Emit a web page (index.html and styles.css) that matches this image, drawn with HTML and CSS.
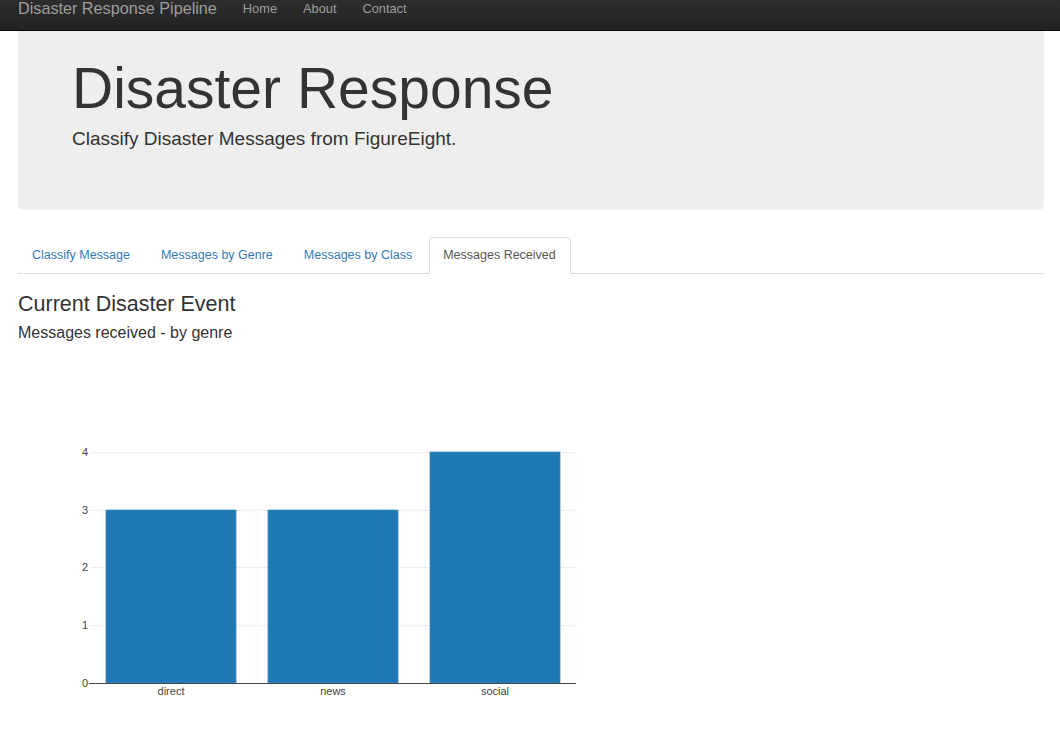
FILE: index.html
```html
<!DOCTYPE html>
<html>
<head>
<meta charset="utf-8">
<title>Disaster Response</title>
<link rel="stylesheet" href="styles.css">
</head>
<body>
<nav class="navbar">
  <a class="brand" href="#">Disaster Response Pipeline</a>
  <ul class="nav-links">
    <li><a href="#">Home</a></li>
    <li><a href="#">About</a></li>
    <li><a href="#">Contact</a></li>
  </ul>
</nav>
<div class="container">
  <div class="jumbotron">
    <h1>Disaster Response</h1>
    <p>Classify Disaster Messages from FigureEight.</p>
  </div>
  <ul class="tabs">
    <li><a href="#">Classify Message</a></li>
    <li><a href="#">Messages by Genre</a></li>
    <li><a href="#">Messages by Class</a></li>
    <li class="active"><a href="#">Messages Received</a></li>
  </ul>
  <h2 class="event">Current Disaster Event</h2>
  <h4 class="sub">Messages received - by genre</h4>
  <div class="chart">
    <svg width="600" height="370" viewBox="0 0 600 370">
      <g class="grid">
        <line x1="73" y1="102.5" x2="558" y2="102.5"/>
        <line x1="73" y1="160.5" x2="558" y2="160.5"/>
        <line x1="73" y1="217.5" x2="558" y2="217.5"/>
        <line x1="73" y1="275.5" x2="558" y2="275.5"/>
      </g>
      <g class="bars">
        <rect x="88" y="160" width="130" height="173"/>
        <rect x="250" y="160" width="130" height="173"/>
        <rect x="412" y="102" width="130" height="231"/>
      </g>
      <line class="axis" x1="71" y1="333.5" x2="558" y2="333.5"/>
      <g class="ylab">
        <text x="70" y="106">4</text>
        <text x="70" y="164">3</text>
        <text x="70" y="221">2</text>
        <text x="70" y="279">1</text>
        <text x="70" y="337">0</text>
      </g>
      <g class="xlab">
        <text x="153" y="345">direct</text>
        <text x="315" y="345">news</text>
        <text x="477" y="345">social</text>
      </g>
    </svg>
  </div>
</div>
</body>
</html>
```

FILE: styles.css
```css
* { box-sizing: border-box; }
html, body { margin: 0; padding: 0; }
body {
  font-family: "Liberation Sans", Arial, Helvetica, sans-serif;
  font-size: 14px;
  color: #333;
  background: #fff;
  width: 1060px;
  height: 750px;
  overflow: hidden;
}
a { text-decoration: none; }

.navbar {
  height: 31px;
  display: flex;
  align-items: flex-start;
  background: linear-gradient(to bottom, #2e2e2e 0%, #222 100%);
  border-bottom: 1px solid #080808;
  padding-left: 18px;
}
.brand {
  font-size: 16.2px;
  line-height: 17px;
  color: #9d9d9d;
}
.nav-links {
  list-style: none;
  margin: 0 0 0 26px;
  padding: 0;
  display: flex;
  gap: 26px;
}
.nav-links a {
  font-size: 12.8px;
  line-height: 16px;
  color: #9d9d9d;
}

.container {
  margin: 0 16px 0 18px;
}

.jumbotron {
  background: #eee;
  border-radius: 0 0 6px 6px;
  height: 179px;
  padding: 24px 54px 0;
}
.jumbotron h1 {
  margin: 0;
  font-size: 57px;
  font-weight: 400;
  line-height: 66px;
  color: #333;
}
.jumbotron p {
  margin: 6px 0 0;
  font-size: 19px;
  line-height: 24px;
}

.tabs {
  list-style: none;
  margin: 27px 0 0;
  padding: 0;
  display: flex;
  border-bottom: 1px solid #ddd;
  height: 37px;
}
.tabs li {
  margin-right: 2px;
  margin-bottom: -1px;
}
.tabs a {
  display: block;
  height: 37px;
  padding: 10px 14px 0 13px;
  font-size: 12.5px;
  line-height: 15px;
  color: #337ab7;
  border: 1px solid transparent;
  border-radius: 4px 4px 0 0;
}
.tabs .active a {
  color: #555;
  background: #fff;
  border-color: #ddd;
  border-bottom-color: #fff;
}

.event {
  margin: 18px 0 0;
  font-size: 21.5px;
  font-weight: 400;
  line-height: 24px;
}
.sub {
  margin: 7px 0 0;
  font-size: 16px;
  font-weight: 400;
  line-height: 20px;
}

.chart {
  margin-top: 7px;
}
.chart svg { display: block; }
.grid line { stroke: #eee; stroke-width: 1; }
.bars rect { fill: #1f77b4; stroke: #3f8dc4; stroke-width: 0.8; }
.axis { stroke: #444; stroke-width: 1; }
.ylab text {
  font-family: "Liberation Sans", Arial, sans-serif;
  font-size: 11px;
  fill: #444;
  text-anchor: end;
}
.xlab text {
  font-family: "Liberation Sans", Arial, sans-serif;
  font-size: 11px;
  fill: #444;
  text-anchor: middle;
}
```
